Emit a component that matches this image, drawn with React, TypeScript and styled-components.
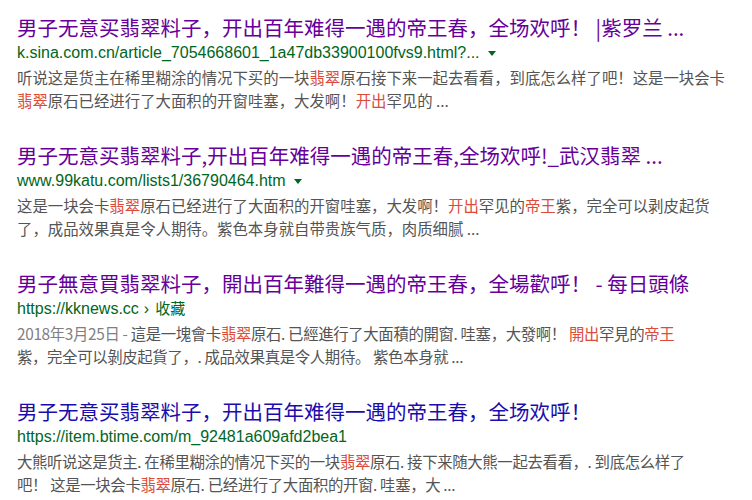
import React from "react";
import styled, { createGlobalStyle } from "styled-components";

const Global = createGlobalStyle`
  html, body { margin: 0; padding: 0; background: #fff; }
  body { font-family: "Liberation Sans", "Noto Sans CJK SC", Arial, sans-serif; }
`;

const List = styled.div`
  display: flex;
  flex-direction: column;
  gap: 30px;
  padding: 14px 0 0 17px;
`;

const Result = styled.div`
  display: flex;
  flex-direction: column;
`;

const Title = styled.a<{ $visited?: boolean }>`
  display: block;
  font-family: "Noto Sans CJK SC", "Liberation Sans", sans-serif;
  font-size: 20.5px;
  line-height: 26px;
  height: 26px;
  white-space: nowrap;
  color: ${(p) => (p.$visited ? "#660099" : "#1a0dab")};
  text-decoration: none;
  cursor: pointer;
`;

const UrlRow = styled.div`
  height: 26px;
  line-height: 26px;
  font-family: "Liberation Sans", Arial, "Noto Sans CJK SC", sans-serif;
  font-size: 16px;
  color: #006621;
  white-space: nowrap;
`;

const Sep = styled.span`
  margin: 0 6px 0 5px;
`;

const Crumb = styled.span`
  font-family: "Noto Sans CJK SC", sans-serif;
  font-size: 15px;
  line-height: 1;
`;

const Arrow = styled.span`
  display: inline-block;
  width: 0;
  height: 0;
  margin-left: 8px;
  vertical-align: middle;
  border-left: 4px solid transparent;
  border-right: 4px solid transparent;
  border-top: 5px solid #006621;
`;

const Snippet = styled.div<{ $tight?: boolean }>`
  font-family: "Noto Sans CJK SC", "Liberation Sans", sans-serif;
  font-size: 15.4px;
  line-height: 23px;
  letter-spacing: ${(p) => (p.$tight ? "-0.35px" : "0")};
  color: #545454;
  white-space: nowrap;
`;

const Em = styled.span`
  color: #dd4b39;
`;

const Date = styled.span`
  color: #808080;
`;

export default function App() {
  return (
    <>
      <Global />
      <List>
        <Result>
          <Title $visited>男子无意买翡翠料子，开出百年难得一遇的帝王春，全场欢呼！ |紫罗兰 ...</Title>
          <UrlRow>
            k.sina.com.cn/article_7054668601_1a47db33900100fvs9.html?...
            <Arrow />
          </UrlRow>
          <Snippet>
            听说这是货主在稀里糊涂的情况下买的一块<Em>翡翠</Em>原石接下来一起去看看，到底怎么样了吧！这是一块会卡
            <br />
            <Em>翡翠</Em>原石已经进行了大面积的开窗哇塞，大发啊！<Em>开出</Em>罕见的 ...
          </Snippet>
        </Result>
        <Result>
          <Title $visited>男子无意买翡翠料子,开出百年难得一遇的帝王春,全场欢呼!_武汉翡翠 ...</Title>
          <UrlRow>
            www.99katu.com/lists1/36790464.htm
            <Arrow />
          </UrlRow>
          <Snippet>
            这是一块会卡<Em>翡翠</Em>原石已经进行了大面积的开窗哇塞，大发啊！<Em>开出</Em>罕见的<Em>帝王</Em>紫，完全可以剥皮起货
            <br />
            了，成品效果真是令人期待。紫色本身就自带贵族气质，肉质细腻 ...
          </Snippet>
        </Result>
        <Result>
          <Title $visited>男子無意買翡翠料子，開出百年難得一遇的帝王春，全場歡呼！ - 每日頭條</Title>
          <UrlRow>
            https://kknews.cc<Sep>›</Sep>
            <Crumb>收藏</Crumb>
          </UrlRow>
          <Snippet $tight>
            <Date>2018年3月25日 - </Date>這是一塊會卡<Em>翡翠</Em>原石. 已經進行了大面積的開窗. 哇塞，大發啊！ <Em>開出</Em>罕見的<Em>帝王</Em>
            <br />
            紫，完全可以剝皮起貨了，. 成品效果真是令人期待。 紫色本身就 ...
          </Snippet>
        </Result>
        <Result>
          <Title>男子无意买翡翠料子，开出百年难得一遇的帝王春，全场欢呼！</Title>
          <UrlRow>https://item.btime.com/m_92481a609afd2bea1</UrlRow>
          <Snippet $tight>
            大熊听说这是货主. 在稀里糊涂的情况下买的一块<Em>翡翠</Em>原石. 接下来随大熊一起去看看，. 到底怎么样了
            <br />
            吧！ 这是一块会卡<Em>翡翠</Em>原石. 已经进行了大面积的开窗. 哇塞，大 ...
          </Snippet>
        </Result>
      </List>
    </>
  );
}
